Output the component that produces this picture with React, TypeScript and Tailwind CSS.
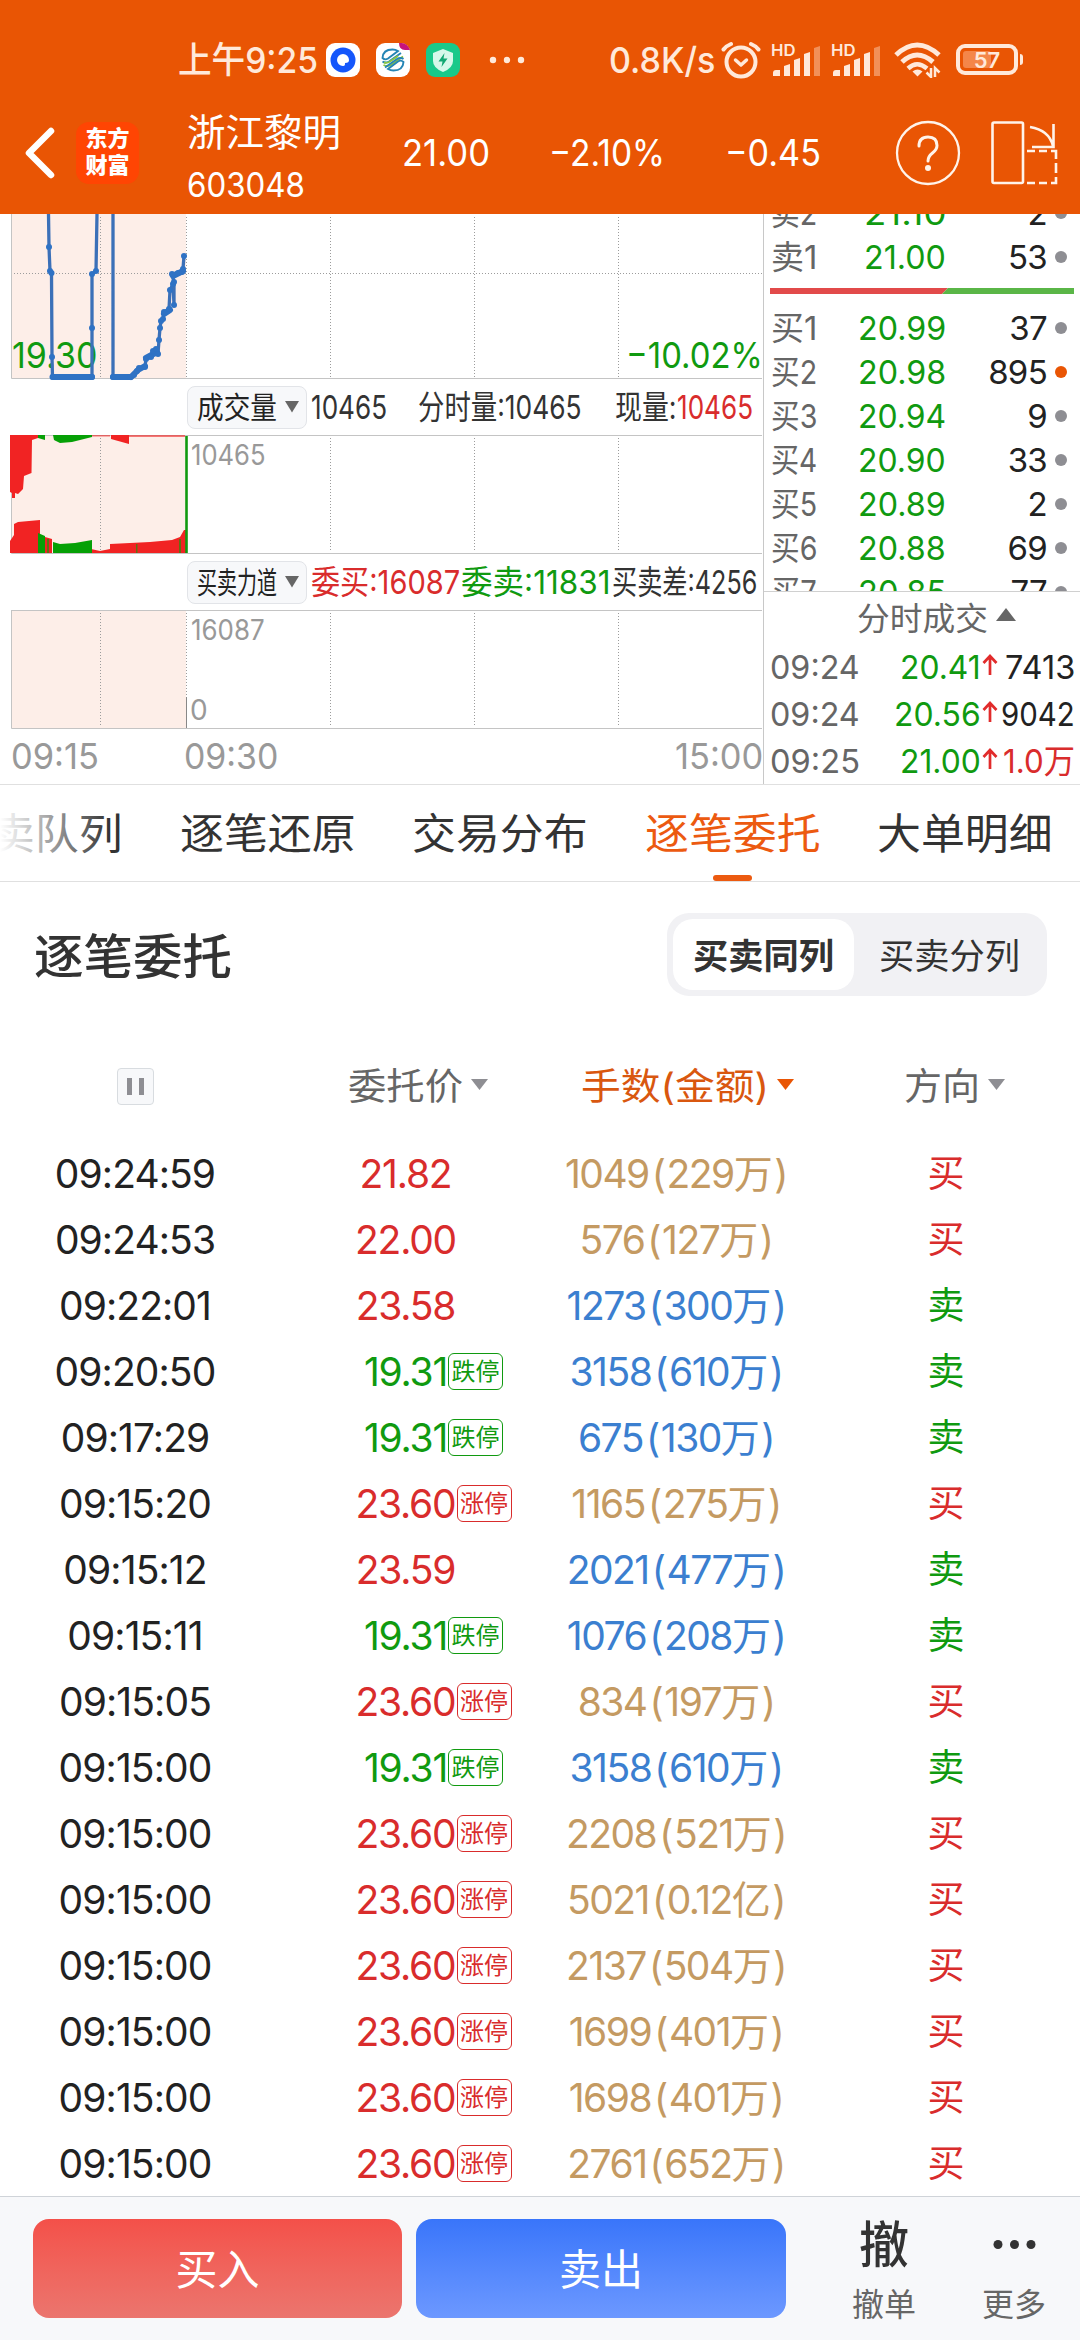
import { useLayoutEffect, useRef, useState, type ReactNode } from "react";

/** Text condensed or expanded horizontally so that it fills exactly `w` pixels. */
function Fit({ w, className = "", children }: { w: number; className?: string; children: ReactNode }) {
  const ref = useRef<HTMLSpanElement>(null);
  const [k, setK] = useState(1);
  useLayoutEffect(() => {
    const measure = () => {
      if (ref.current) setK(w / ref.current.offsetWidth);
    };
    measure();
    document.fonts?.ready.then(measure);
  }, [w]);
  return (
    <span className={`block shrink-0 ${className}`} style={{ width: w }}>
      <span ref={ref} className="inline-block origin-left whitespace-nowrap" style={{ transform: `scaleX(${k})` }}>
        {children}
      </span>
    </span>
  );
}

const GREEN = "text-[#109a10]";
const RED = "text-[#d92c2c]";

function Signal() {
  return (
    <span className="relative block h-[34px] w-[50px]">
      <span className="absolute top-0 left-0 text-[16px] leading-[14px] font-semibold">
        <Fit w={24}>HD</Fit>
      </span>
      <svg className="absolute inset-0" width="50" height="34" viewBox="0 0 50 34" fill="#ffe9da">
        <path d="M2 33v-3q0-3 3-3h4v6z" />
        <path d="M13 33V23l6-2v12z" />
        <path d="M23 33V17l6-2v18z" />
        <path d="M33 33V11l6-2v24z" />
        <path d="M43 33V5l6-2v30z" opacity=".4" />
      </svg>
    </span>
  );
}

function StatusBar() {
  return (
    <div className="flex h-[75px] items-center pt-[44px] text-[#ffe9da]">
      <Fit w={140} className="ml-[178px] text-[36px] leading-[40px] font-medium">上午9:25</Fit>
      <svg className="ml-[8px]" width="34" height="34" viewBox="0 0 34 34">
        <rect width="34" height="34" rx="9" fill="#fff" />
        <circle cx="17" cy="17" r="12.5" fill="#1456fb" />
        <path d="M17 11a6 6 0 1 0 0 12c2 0 2-1 2-3 3 0 4-1 4-3a6 6 0 0 0-6-6z" fill="#fff" />
      </svg>
      <svg className="ml-4" width="34" height="34" viewBox="0 0 34 34">
        <rect width="34" height="34" rx="9" fill="#fff" />
        <path d="M23 0h2a9 9 0 0 1 9 7h-5q-6 0-6-7z" fill="#c6137b" />
        <g fill="none" strokeWidth="1.9">
          <path d="M6.500 15Q7 6.500 16.500 6.500q3 0 5.500 1.500l-10 7.500q-3 2-5.500-.5z" stroke="#2585b5" />
          <path d="M25 10L13 18.500q-3.500 2-6.500 0" stroke="#2585b5" />
          <path d="M27 13.500L15 22q-3.500 2-7.500 0M8 19.500q3 1 6-1L22 13" stroke="#8cc63f" />
          <path d="M27.500 19Q27 27.500 17.500 27.500q-3 0-5.500-1.500l10-7.500q3-2 5.500.5z" stroke="#2585b5" />
          <path d="M9 24.500L21 16q3.500-2 6.500 0" stroke="#2585b5" />
        </g>
      </svg>
      <svg className="ml-4" width="34" height="34" viewBox="0 0 34 34">
        <rect width="34" height="34" rx="9" fill="#18c98a" />
        <path d="M17 6l10 4v8q0 7-10 11Q7 25 7 18v-8z" fill="#d5f8ea" />
        <path d="M18.500 10l-6 8.500h4L15.500 24l6-8.500h-4z" fill="#12a873" />
      </svg>
      <svg className="ml-[29px]" width="36" height="8" viewBox="0 0 36 8" fill="#ffe9da">
        <circle cx="4" cy="4" r="3.200" />
        <circle cx="18" cy="4" r="3.200" />
        <circle cx="32" cy="4" r="3.200" />
      </svg>
      <Fit w={106} className="ml-[84px] text-[36px] leading-[40px] font-medium">0.8K/s</Fit>
      <svg className="ml-[6px]" width="40" height="38" viewBox="0 0 40 38" fill="none" stroke="#ffe9da" strokeLinecap="round">
        <circle cx="20" cy="21" r="14.500" strokeWidth="4" />
        <path d="M2.500 8.500Q5 5 10 3M37.500 8.500Q35 5 30 3" strokeWidth="4" />
        <path d="M14.500 19l5.500 5 5.500-5" strokeWidth="3.500" strokeLinejoin="round" />
      </svg>
      <div className="ml-[10px]"><Signal /></div>
      <div className="ml-[10px]"><Signal /></div>
      <svg className="ml-[13px]" width="48" height="36" viewBox="0 0 48 36" fill="none" stroke="#ffe9da">
        <path d="M2 13Q23-7 45 13" strokeWidth="5" />
        <path d="M8 20Q23 6 39 20" strokeWidth="5" />
        <path d="M14 26.500Q23 18 33 26.500" strokeWidth="4.500" />
        <path d="M23.500 34.500l-5-5q5-4 10 0z" fill="#ffe9da" stroke="none" />
        <path d="M37 26v9l-4.500-4.500M41 35v-9l4.500 4.500" strokeWidth="2.500" />
      </svg>
      <span className="relative ml-[14px] flex h-[31px] w-[62px] items-center justify-center rounded-[9px] border-4 border-[#ffe9da]">
        <span className="absolute top-[3px] left-[3px] h-[17px] w-[28px] rounded-[3px] bg-[#f4864a]" />
        <span className="relative text-[22px] leading-none font-semibold">57</span>
        <span className="absolute top-[6px] -right-[9px] h-[11px] w-[3px] rounded-r-sm bg-[#ffe9da]" />
      </span>
    </div>
  );
}

function TitleBar() {
  return (
    <div className="flex h-[139px] items-center pt-[16px] text-white">
      <svg className="ml-[22px]" width="36" height="56" viewBox="0 0 36 56" fill="none" stroke="#fff" strokeWidth="6.500" strokeLinecap="round" strokeLinejoin="round">
        <path d="M29 6L7 28l22 22" />
      </svg>
      <div className="ml-[18px] flex h-[62px] w-[63px] flex-col items-center justify-center rounded-[13px] bg-[#ff4503] pb-[6px] font-['Noto_Sans_CJK_SC',sans-serif] text-[22px] leading-[27px] font-black">
        <span>东方</span>
        <span>财富</span>
      </div>
      <div className="ml-[48px] flex w-[213px] flex-col pt-[12px]">
        <Fit w={154} className="h-[52px] text-[38px] leading-[52px]">浙江黎明</Fit>
        <Fit w={118} className="h-[54px] text-[34px] leading-[54px]">603048</Fit>
      </div>
      <Fit w={88} className="ml-[2px] text-[37px] leading-[40px]">21.00</Fit>
      <Fit w={116} className="ml-[59px] text-[37px] leading-[40px]">−2.10%</Fit>
      <Fit w={96} className="ml-[60px] text-[37px] leading-[40px]">−0.45</Fit>
      <svg className="ml-[73px]" width="68" height="68" viewBox="0 0 68 68" fill="none" stroke="#fff3ea" strokeLinecap="round">
        <circle cx="34" cy="34" r="31" strokeWidth="2.300" />
        <path d="M25 27q0-9 9-9t9 8.500q0 4-4.500 7.500T34 42" strokeWidth="3" />
        <circle cx="34" cy="49" r="3" fill="#fff3ea" stroke="none" />
      </svg>
      <svg className="ml-[28px]" width="70" height="64" viewBox="0 0 70 64" fill="none" stroke="#fff3ea" strokeWidth="2.600">
        <rect x="2.500" y="1.500" width="30.500" height="60.500" rx="1.500" />
        <path d="M40 6q19 3 23 19M63.500 3v23H42" />
        <path d="M37 30h8m4 0h8m4 0h5v8m0 4v10m0 4v6h-5m-4 0h-8m-4 0h-8" />
      </svg>
    </div>
  );
}

const VLINES = [100, 186, 330, 474, 618];

function Grid({ h, open }: { h: number; open?: boolean }) {
  return (
    <g>
      <rect x="12" y="0" width="174" height={h} fill="#fdeee8" />
      {VLINES.map((x) => (
        <path key={x} d={`M${x}.500 3V${h - 2}`} stroke="#9c9c9c" strokeDasharray="1 2" />
      ))}
      {!open && <path d="M11 .500H762" stroke="#c4c4c4" />}
      <path d={`M11.500 0V${h - 0.5}H762`} stroke="#c4c4c4" fill="none" />
    </g>
  );
}

const PRICE: [number, number][] = [
  [49, 33], [50, 57], [51.5, 59], [52, 143], [52.5, 163], [92, 163], [92, 114], [92, 60], [96, 57],
];
const RISE: [number, number][] = [
  [113, 163], [130, 163], [134, 161], [137, 157], [139, 154], [145, 153], [146, 145], [151, 143], [153, 137], [156, 135],
  [158, 140], [159, 126], [160, 114], [161, 107], [163, 105], [164, 98], [169, 95], [170, 76], [173, 70], [174, 91],
  [174, 68], [172, 60], [178, 59], [182, 58], [183, 55], [184, 42],
];

function PriceChart() {
  return (
    <div className="relative h-[165px]">
      <svg width="763" height="165" viewBox="0 0 763 165">
        <Grid h={165} open />
        <path d="M14 59.500H762" stroke="#9c9c9c" strokeDasharray="1 2" />
      </svg>
      <span className={`absolute top-[121px] left-[12px] text-[36px] leading-[40px] ${GREEN}`}>
        <Fit w={85}>19.30</Fit>
      </span>
      <span className={`absolute top-[121px] left-[626px] text-[36px] leading-[40px] ${GREEN}`}>
        <Fit w={137}>−10.02%</Fit>
      </span>
      <svg className="absolute inset-0" width="763" height="168" viewBox="0 0 763 168" fill="none" stroke="#3b70b8" strokeWidth="3.300" strokeLinejoin="round">
        <path d={`M48.500 0L${PRICE.map((p) => p.join(" ")).join("L")}L97 0`} />
        <path d={`M113 0L${RISE.map((p) => p.join(" ")).join("L")}`} />
        <path d="M53 163H92M113 163H131" strokeWidth="6" strokeLinecap="round" stroke="#2f72c4" />
        <path d="M131 163L138 156 145 152M146 144L157 138M164 100L170 96M173 62L183 57" strokeWidth="6" strokeLinecap="round" stroke="#2f72c4" />
        {[...PRICE, ...RISE].map(([x, y], i) => (
          <circle key={i} cx={x} cy={y} r="3" fill="#2f72c4" stroke="none" />
        ))}
      </svg>
    </div>
  );
}

function VolumeChart() {
  return (
    <div className="relative h-[119px]">
      <svg width="763" height="119" viewBox="0 0 763 119">
        <Grid h={119} />
        <g fill="#f12323">
          <path d="M10 0H38V3L32 5 31.500 38 24 41 23 54 18 59 15 58V63H12V58L10 57z" />
          <path d="M111 0H129V9L111 4z" />
          <path d="M92 0H110V1.500H92zM129 0H185V2H129z" opacity=".6" />
          <path d="M10 118V106L14 100V89L18 87 40 85V118z" />
          <path d="M45 118V102L52 104V118zM91 114L100 116 110 114V109L150 107 172 105 180 102 184 95H187V118H91z" />
        </g>
        <g fill="#06a006">
          <path d="M38 0H45V5L38 3zM53 0H92V2L72 7 60 8 54 5z" />
          <path d="M38 98L45 101V118H38zM53 107L60 109 75 108 92 105V118H53z" />
          <path d="M47 104h2v14h-2zM136 109h1.500v9H136zM179 104h2v14h-2z" opacity=".6" />
        </g>
        <path d="M186.500 1V118" stroke="#109a10" strokeWidth="2.600" />
      </svg>
      <span className="absolute top-[4px] left-[191px] text-[28px] leading-[32px] text-[#999]">
        <Fit w={75}>10465</Fit>
      </span>
    </div>
  );
}

function PowerChart() {
  return (
    <div className="relative h-[119px]">
      <svg width="763" height="119" viewBox="0 0 763 119">
        <Grid h={119} />
        <path d="M186.500 87V118" stroke="#888" />
      </svg>
      <span className="absolute top-[4px] left-[191px] text-[28px] leading-[32px] text-[#999]">
        <Fit w={74}>16087</Fit>
      </span>
      <span className="absolute top-[84px] left-[190px] text-[28px] leading-[32px] text-[#999]">0</span>
    </div>
  );
}

function Picker({ label }: { label: string }) {
  return (
    <span className="ml-[187px] flex h-[43px] w-[120px] shrink-0 items-center rounded-[8px] border border-[#e2e4e8] bg-[#f7f8fa] pl-[9px] text-[30px] leading-[40px] text-[#222]">
      <Fit w={80}>{label}</Fit>
      <svg className="ml-[8px]" width="14" height="12" viewBox="0 0 14 12"><path d="M0 0H14L7 11.500z" fill="#666" /></svg>
    </span>
  );
}

function ChartColumn() {
  return (
    <div className="h-[570px] w-[763px] shrink-0">
      <PriceChart />
      <div className="flex h-[56px] items-center text-[33px] leading-[40px] text-[#333]">
        <Picker label="成交量" />
        <Fit w={76} className="ml-[4px]">10465</Fit>
        <Fit w={164} className="ml-[31px]">分时量:10465</Fit>
        <span className="ml-[33px] flex">
          <Fit w={62}>现量:</Fit>
          <Fit w={76} className={RED}>10465</Fit>
        </span>
      </div>
      <VolumeChart />
      <div className="flex h-[56px] items-center text-[33px] leading-[40px] text-[#333]">
        <Picker label="买卖力道" />
        <Fit w={149} className={`ml-[4px] ${RED}`}>委买:16087</Fit>
        <Fit w={150} className={`ml-px ${GREEN}`}>委卖:11831</Fit>
        <Fit w={145} className="ml-px">买卖差:4256</Fit>
      </div>
      <PowerChart />
      <div className="flex h-[54px] items-center text-[36px] leading-[40px] text-[#999]">
        <Fit w={88} className="ml-[11px]">09:15</Fit>
        <Fit w={94} className="ml-[85px]">09:30</Fit>
        <Fit w={88} className="ml-auto">15:00</Fit>
      </div>
    </div>
  );
}

type Level = [label: string, price: string, qty: string, hot?: boolean];

const BIDS: Level[] = [
  ["买1", "20.99", "37"],
  ["买2", "20.98", "895", true],
  ["买3", "20.94", "9"],
  ["买4", "20.90", "33"],
  ["买5", "20.89", "2"],
  ["买6", "20.88", "69"],
  ["买7", "20.85", "77"],
];

function Quote({ row: [label, price, qty, hot] }: { row: Level }) {
  return (
    <div className="flex h-[44px] shrink-0 items-center pr-[13px] pl-[7px] text-[33px] leading-[40px]">
      <Fit w={46} className="text-[#666]">{label}</Fit>
      <span className={`w-[129px] ${GREEN}`}>
        <Fit w={price.startsWith("21") ? 82 : 88} className="ml-auto">{price}</Fit>
      </span>
      <span className="ml-auto tracking-[-0.7px] text-[#222]">{qty}</span>
      <span className={`ml-[8px] h-3 w-3 rounded-full ${hot ? "bg-[#e95504]" : "bg-[#8e8e93]"}`} />
    </div>
  );
}

const TRADES: [string, string, number, string, number, boolean?][] = [
  ["09:24", "20.41", 81, "7413", 70],
  ["09:24", "20.56", 87, "9042", 74],
  ["09:25", "21.00", 81, "1.0万", 72, true],
];

function BookColumn() {
  return (
    <div className="flex h-[570px] flex-1 flex-col border-l border-[#c8c8c8]">
      <div className="flex h-[379px] flex-col overflow-hidden border-b border-[#d0d0d0]">
        <div className="-mt-[23px]">
          <Quote row={["卖2", "21.10", "2"]} />
          <Quote row={["卖1", "21.00", "53"]} />
        </div>
        <svg className="mt-[9px] mb-[12px] ml-[6px] shrink-0" width="304" height="6" viewBox="0 0 304 6">
          <path d="M0 0H178L172 6H0z" fill="#e24a4a" />
          <path d="M178 0H304V6H172z" fill="#5ab647" />
        </svg>
        {BIDS.map((b) => <Quote key={b[0]} row={b} />)}
      </div>
      <div className="flex h-[51px] items-center pt-[2px] pl-[93px] text-[32px] leading-[40px] text-[#666]">
        <Fit w={131}>分时成交</Fit>
        <svg className="-mt-[8px] ml-[8px]" width="20" height="13" viewBox="0 0 20 13"><path d="M0 13L10 0 20 13z" fill="#666" /></svg>
      </div>
      {TRADES.map(([t, p, pw, q, qw, big], i) => (
        <div key={i} className="flex h-[47px] items-center pr-[5px] pl-[6px] text-[33px] leading-[40px]">
          <Fit w={90} className="text-[#666]">{t}</Fit>
          <span className="w-[121px]"><Fit w={pw} className={`ml-auto ${GREEN}`}>{p}</Fit></span>
          <svg className="-mt-[4px] ml-[1px]" width="16" height="22" viewBox="0 0 16 22" fill="none" stroke="#e12b2b" strokeWidth="2.700">
            <path d="M8 21V2M1.500 9L8 2l6.500 7" />
          </svg>
          <Fit w={qw} className={`ml-auto ${big ? RED : "text-[#222]"}`}>{q}</Fit>
        </div>
      ))}
    </div>
  );
}

function Tabs() {
  return (
    <div className="relative flex h-[98px] shrink-0 overflow-hidden border-y border-[#e0e0e0] text-[42px] leading-[98px] text-[#333]">
      <div className="-ml-[53px] flex gap-[57px]">
        {["买卖队列", "逐笔还原", "交易分布", "逐笔委托", "大单明细"].map((t) => (
          <div key={t} className={`relative ${t === "逐笔委托" ? "text-[#ec5a10]" : ""}`}>
            <Fit w={175.5}>{t}</Fit>
            {t === "逐笔委托" && <span className="absolute bottom-0 left-[68px] h-[6px] w-[39px] rounded-full bg-[#ec5a10]" />}
          </div>
        ))}
      </div>
      <span className="absolute inset-y-0 left-0 w-[110px] bg-linear-to-r from-white to-transparent" />
    </div>
  );
}

function Caret({ className }: { className: string }) {
  return (
    <svg className={`-mt-[5px] ml-[8px] ${className}`} width="17" height="11" viewBox="0 0 17 11" fill="currentColor">
      <path d="M0 0H17L8.500 11z" />
    </svg>
  );
}

type Order = [string, string, string, "买" | "卖"];
const ORDERS: Order[] = [
  ["09:24:59", "21.82", "1049(229万)", "买"],
  ["09:24:53", "22.00", "576(127万)", "买"],
  ["09:22:01", "23.58", "1273(300万)", "卖"],
  ["09:20:50", "19.31", "3158(610万)", "卖"],
  ["09:17:29", "19.31", "675(130万)", "卖"],
  ["09:15:20", "23.60", "1165(275万)", "买"],
  ["09:15:12", "23.59", "2021(477万)", "卖"],
  ["09:15:11", "19.31", "1076(208万)", "卖"],
  ["09:15:05", "23.60", "834(197万)", "买"],
  ["09:15:00", "19.31", "3158(610万)", "卖"],
  ["09:15:00", "23.60", "2208(521万)", "买"],
  ["09:15:00", "23.60", "5021(0.12亿)", "买"],
  ["09:15:00", "23.60", "2137(504万)", "买"],
  ["09:15:00", "23.60", "1699(401万)", "买"],
  ["09:15:00", "23.60", "1698(401万)", "买"],
  ["09:15:00", "23.60", "2761(652万)", "买"],
];

const COLS = "grid grid-cols-[270px_270px_270px_270px] items-center";

function OrderRow({ row: [time, price, amount, side] }: { row: Order }) {
  const down = price === "19.31";
  const tag = down ? "跌停" : price === "23.60" ? "涨停" : null;
  const [lots, money] = amount.slice(0, -1).split("(");
  return (
    <div className={`${COLS} h-[66px] text-[39px] leading-[66px] tracking-[-1.5px]`}>
      <span className="text-center tracking-[-0.9px] text-[#222]">{time}</span>
      <span className={`flex justify-center pl-px ${down ? GREEN : RED}`}>
        <span className="relative tracking-[-1.2px]">
          {price}
          {tag && (
            <span className="absolute top-[14px] left-full ml-px flex h-[37px] w-[55px] items-center justify-center rounded-[6px] border border-current text-[24px] leading-none tracking-normal">
              {tag}
            </span>
          )}
        </span>
      </span>
      <span className={`pl-[2px] text-center ${side === "买" ? "text-[#c49a62]" : "text-[#3b7fd0]"}`}>
        {lots}
        <span className="mr-[2px] ml-[3px]">(</span>
        {money}
        <span className="ml-[3px]">)</span>
      </span>
      <span className={`pl-[2px] text-center text-[37px] tracking-normal ${side === "买" ? RED : GREEN}`}>{side}</span>
    </div>
  );
}

function Footer() {
  return (
    <div className="flex h-[144px] shrink-0 items-start border-t border-[#cfd3d8] bg-[#f7f8fa] pt-[22px] pl-[33px] leading-[101px] text-white">
      <div className="flex h-[99px] w-[369px] justify-center rounded-[16px] bg-linear-to-b from-[#f45049] to-[#eb756e] text-[42px]">
        <Fit w={84}>买入</Fit>
      </div>
      <div className="ml-[14px] flex h-[99px] w-[370px] justify-center rounded-[16px] bg-linear-to-b from-[#3975fa] to-[#6c98ff] text-[42px]">
        <Fit w={84}>卖出</Fit>
      </div>
      <div className="ml-[33px] flex w-[130px] flex-col items-center text-[#333]">
        <span className="h-[52px] text-[50px] leading-[53px] font-medium">撤</span>
        <span className="mt-[12px] text-[32px] leading-[44px] text-[#666]">撤单</span>
      </div>
      <div className="flex w-[130px] flex-col items-center text-[#333]">
        <svg width="44" height="52" viewBox="0 0 44 52" fill="#333">
          <circle cx="6" cy="25.500" r="4.500" />
          <circle cx="22.500" cy="25.500" r="4.500" />
          <circle cx="39" cy="25.500" r="4.500" />
        </svg>
        <span className="mt-[12px] text-[32px] leading-[44px] text-[#666]">更多</span>
      </div>
    </div>
  );
}

export default function App() {
  return (
    <div className="flex h-[2340px] w-[1080px] flex-col overflow-hidden bg-white font-[Inter,'Noto_Sans_CJK_SC',sans-serif]">
      <header className="h-[214px] shrink-0 bg-[#e95504]">
        <StatusBar />
        <TitleBar />
      </header>
      <div className="flex h-[570px] shrink-0">
        <ChartColumn />
        <BookColumn />
      </div>
      <Tabs />
      <div className="mt-[31px] flex h-[83px] shrink-0 items-center justify-between pr-[33px] pl-[34px]">
        <Fit w={198} className="pt-[4px] text-[48px] leading-[60px] font-medium text-[#333]">逐笔委托</Fit>
        <div className="flex h-[83px] w-[380px] rounded-[22px] bg-[#f1f1f4] p-[6px] text-[35px] leading-[74px] text-[#333]">
          <span className="flex h-[71px] w-[181px] justify-center rounded-[20px] bg-white font-bold"><Fit w={141}>买卖同列</Fit></span>
          <span className="ml-[25px]"><Fit w={141}>买卖分列</Fit></span>
        </div>
      </div>
      <div className={`${COLS} mt-[57px] h-[66px] shrink-0 text-[37px] leading-[68px] text-[#666]`}>
        <span className="mx-auto -mt-[2px] flex h-[37px] w-[37px] items-center justify-center gap-[7px] rounded-[4px] border border-[#d8dce0] bg-[#f7f8fa]">
          <span className="h-[17px] w-[5px] bg-[#8e8e93]" />
          <span className="h-[17px] w-[5px] bg-[#8e8e93]" />
        </span>
        <span className="flex items-center pl-[78px]"><Fit w={115}>委托价</Fit><Caret className="text-[#8e8e93]" /></span>
        <span className="flex items-center pl-[41px] text-[#d9570f]"><Fit w={188}>手数(金额)</Fit><Caret className="text-[#e95504]" /></span>
        <span className="flex items-center pl-[94px]"><Fit w={76}>方向</Fit><Caret className="text-[#8e8e93]" /></span>
      </div>
      <div className="mt-[22px] min-h-0 flex-1">
        {ORDERS.map((o, i) => <OrderRow key={i} row={o} />)}
      </div>
      <Footer />
    </div>
  );
}
